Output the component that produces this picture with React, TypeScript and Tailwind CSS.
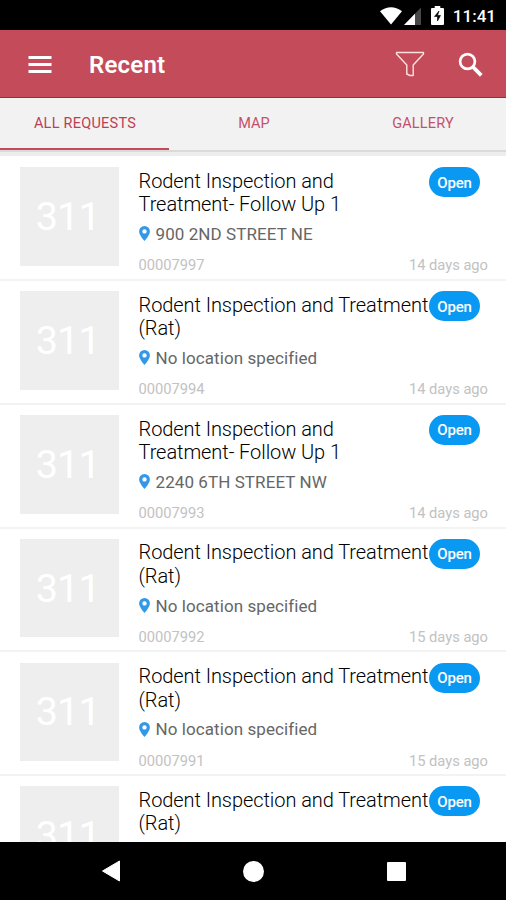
interface ServiceRequest {
  id: string;
  title: string[];
  location: string;
  age: string;
}

const followUp = ["Rodent Inspection and", "Treatment- Follow Up 1"];
const rat = ["Rodent Inspection and Treatment", "(Rat)"];

const requests: ServiceRequest[] = [
  { id: "00007997", title: followUp, location: "900 2ND STREET NE", age: "14 days ago" },
  { id: "00007994", title: rat, location: "No location specified", age: "14 days ago" },
  { id: "00007993", title: followUp, location: "2240 6TH STREET NW", age: "14 days ago" },
  { id: "00007992", title: rat, location: "No location specified", age: "15 days ago" },
  { id: "00007991", title: rat, location: "No location specified", age: "15 days ago" },
];

function StatusBar() {
  return (
    <div className="flex h-[30px] shrink-0 items-center justify-end bg-black pr-[10px] text-white">
      <svg className="mt-px h-[18px] w-[58px]" viewBox="0 0 58 18" fill="currentColor">
        <path d="M0 4.3Q11 -3.6 22 4.3L11 17.5Z" />
        <path d="M41 .5V18H24Z" opacity=".28" />
        <path d="M35 6.7V18H24Z" />
      </svg>
      <svg className="-ml-[7px] h-[19px] w-[13px]" viewBox="0 0 13 19">
        <path d="M3.7 0h5.6v2H12q1 0 1 1v15q0 1-1 1H1q-1 0-1-1V3q0-1 1-1h2.7z" fill="#fff" />
        <path d="M8 5 3.500 10.500h3V15L9.500 9.500h-3z" fill="#000" stroke="#000" strokeWidth=".6" />
      </svg>
      <span className="mt-[2px] ml-[9px] text-[17px] leading-none font-medium">11:41</span>
    </div>
  );
}

function Header() {
  return (
    <header className="flex h-[68px] shrink-0 items-center border-b border-[#b51f37] bg-[#c44b5a] pr-[23px] pl-7 text-white">
      <svg className="mt-[2px] h-[18px] w-[24px]" viewBox="0 0 24 18" fill="#fff">
        <path d="M.5 0h23v3H.5zM.5 7h23v3H.5zM.5 14h23v3H.5z" />
      </svg>
      <h1 className="mt-[3px] ml-[37px] text-2xl font-semibold tracking-[0.2px]">Recent</h1>
      <svg className="mt-px ml-auto h-[26px] w-[30px]" viewBox="0 0 30 26" fill="none" stroke="#ffe1dd" strokeWidth="1.4" strokeLinejoin="round">
        <path d="M1.500 1.500h27v1.500l-10.300 11v10.500h-3.200l-3.200-1.500v-9L1.500 3z" />
      </svg>
      <svg className="mt-[2px] ml-[33px] h-[25px] w-[25px]" viewBox="0 0 25 25" fill="none" stroke="#fff">
        <circle cx="9.500" cy="9.500" r="7.400" strokeWidth="2.700" />
        <path d="m15 15 8.300 8.300" strokeWidth="3.800" />
      </svg>
    </header>
  );
}

function Tabs() {
  return (
    <nav className="flex h-[58px] shrink-0 flex-col bg-[#f2f2f2]">
      <div className="grid h-[52px] grid-cols-[169px_170px_167px] text-center text-[14.5px] leading-[46px] text-[#c4506a]">
        <span className="border-b-2 border-[#c44b5a] pt-[3px] pl-px tracking-[0.25px] text-[#bd3f56]">ALL REQUESTS</span>
        <span className="pt-[3px]">MAP</span>
        <span className="pt-[3px] pl-px tracking-[0.15px]">GALLERY</span>
      </div>
      <div className="h-[2px] bg-[#dadada]" />
      <div className="h-1 bg-[#ededed]" />
    </nav>
  );
}

function Thumbnail() {
  return (
    <div className="flex size-[98.5px] shrink-0 items-center justify-center bg-[#eee] pr-[3px] text-[39.5px] tracking-[-0.8px] text-white">
      311
    </div>
  );
}

function RequestTitle({ lines }: { lines: string[] }) {
  return (
    <h2 className="pt-[2.5px] text-[20px] leading-[23.5px] font-light tracking-[-0.07px] whitespace-nowrap text-black">
      {lines.map((line) => (
        <span key={line} className="block">{line}</span>
      ))}
    </h2>
  );
}

function StatusBadge() {
  return (
    <span className="absolute top-[10.2px] right-[26px] flex h-[30px] w-[51px] items-center justify-center rounded-full bg-[#0a99f2] pt-px text-[15px] font-medium tracking-[-0.2px] text-white">
      Open
    </span>
  );
}

function RequestRow({ request }: { request: ServiceRequest }) {
  return (
    <li className="relative flex h-[123.8px] shrink-0 border-b-2 border-[#f3f3f3] pt-[10.2px] pr-[18px] pl-5">
      <Thumbnail />
      <div className="ml-5 min-w-0 flex-1">
        <RequestTitle lines={request.title} />
        <p className="mt-[6.500px] flex h-[23px] items-center text-[17px] tracking-[0.08px] text-[#666]">
          <svg className="mr-[6px] mb-[2px] h-[15px] w-[11px] shrink-0" viewBox="0 0 11 15" fill="#3498e8">
            <path fillRule="evenodd" d="M5.500 0A5.400 5.400 0 0 0 .1 5.400C.1 9 5.500 15 5.500 15s5.400-6 5.400-9.600A5.400 5.400 0 0 0 5.500 0Zm0 3.200a2.200 2.200 0 1 1 0 4.400 2.200 2.200 0 0 1 0-4.400Z" />
          </svg>
          {request.location}
        </p>
        <div className="mt-[9px] flex justify-between text-[14.700px] leading-[20px] text-[#c2c2c2]">
          <span>{request.id}</span>
          <span>{request.age}</span>
        </div>
      </div>
      <StatusBadge />
    </li>
  );
}

function NavigationBar() {
  return (
    <div className="flex h-[58px] shrink-0 items-center justify-between bg-black pr-[100px] pl-[101px]">
      <svg className="h-[22px] w-[20px]" viewBox="0 0 20 22" fill="#fff">
        <path d="M1.500 11 18.500 1v20z" stroke="#fff" strokeLinejoin="round" />
      </svg>
      <div className="mr-px size-[21px] rounded-full bg-white" />
      <div className="size-[19px] rounded-[1px] bg-white" />
    </div>
  );
}

export default function App() {
  return (
    <div className="flex h-[900px] w-[506px] flex-col overflow-hidden bg-white font-['Roboto',sans-serif]">
      <StatusBar />
      <Header />
      <Tabs />
      <ul className="flex min-h-0 flex-1 flex-col overflow-hidden pt-[1.3px]">
        {requests.map((request) => (
          <RequestRow key={request.id} request={request} />
        ))}
        <li className="relative flex pt-[10.2px] pl-5">
          <Thumbnail />
          <div className="ml-5">
            <RequestTitle lines={rat} />
          </div>
          <StatusBadge />
        </li>
      </ul>
      <NavigationBar />
    </div>
  );
}
